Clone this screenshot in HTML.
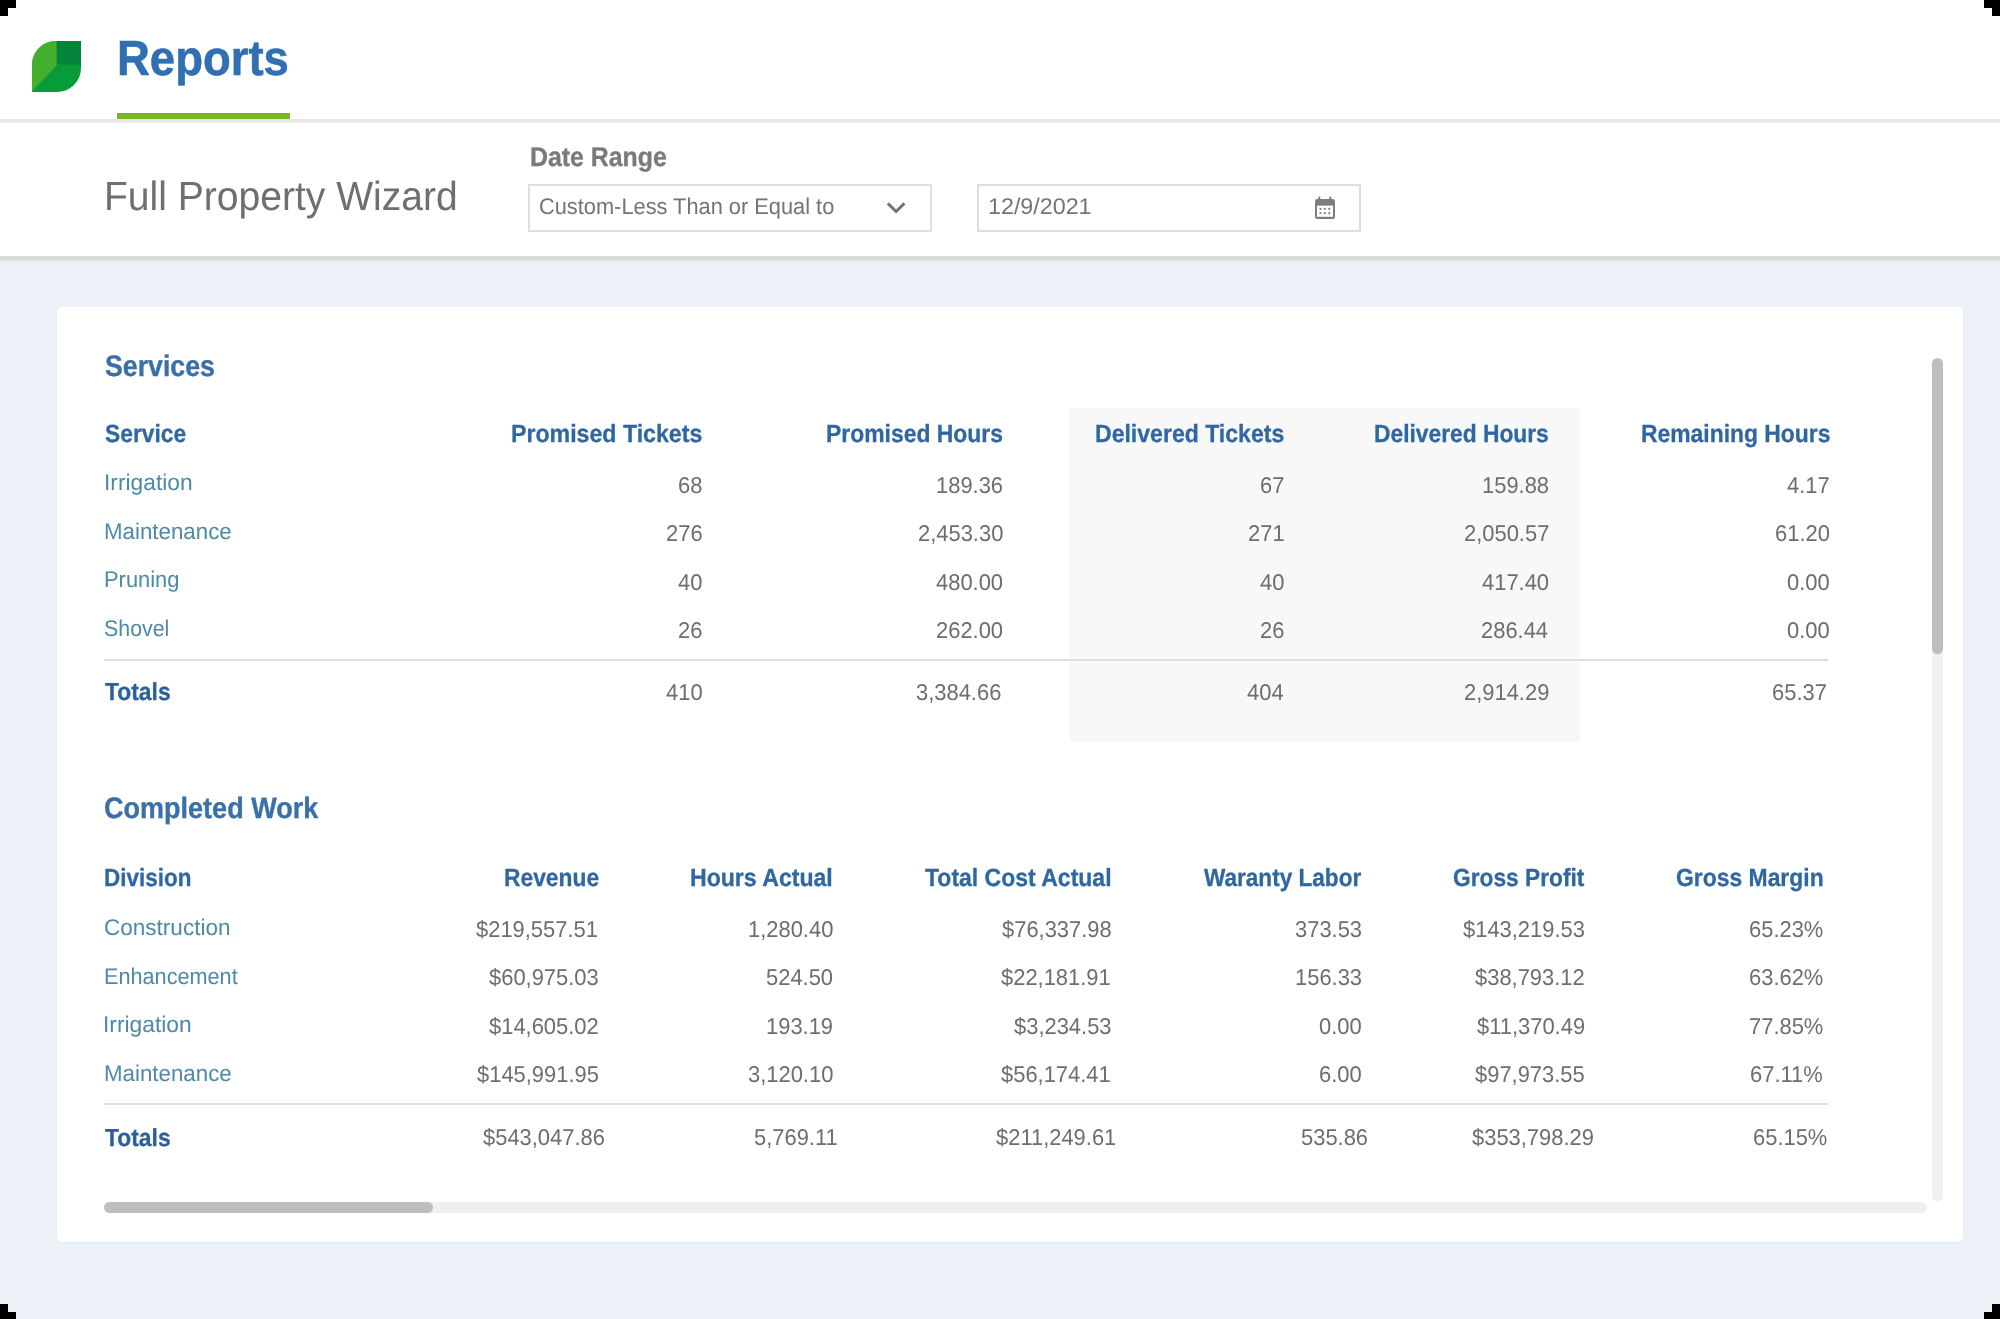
<!DOCTYPE html>
<html>
<head>
<meta charset="utf-8">
<title>Reports - Full Property Wizard</title>
<style>
html,body{margin:0;padding:0;}
body{width:2000px;height:1319px;overflow:hidden;background:#ecf0f7;font-family:"Liberation Sans",sans-serif;position:relative;}
.abs{position:absolute;}
.t{position:absolute;white-space:nowrap;transform-origin:0 0;display:block;text-rendering:geometricPrecision;}
#top{left:0;top:0;width:2000px;height:119px;background:#fff;}
#sep1{left:0;top:119px;width:2000px;height:4px;background:linear-gradient(#e2e4e4,#eff0f0);}
#sub{left:0;top:123px;width:2000px;height:133px;background:#fff;}
#sep2{left:0;top:256px;width:2000px;height:8px;background:linear-gradient(#d9dbdd 0,#d6d8da 45%,#e4e7ea 62%,#ebeef3 80%,#ecf0f7 100%);}
#uline{left:117px;top:113px;width:172.6px;height:6px;background:#77b726;}
.box{box-sizing:border-box;border:2px solid #dcdedf;background:#fff;}
#sel{left:528px;top:184px;width:404px;height:48px;}
#date{left:977px;top:184px;width:384px;height:48px;}
#card{left:57px;top:307px;width:1906px;height:935px;background:#fff;border-radius:5px;box-shadow:0 1px 1px rgba(0,0,0,0.035);}
#shade{left:1069px;top:408px;width:511px;height:334px;background:#f8f8f8;}
.hr{height:2px;background:#dcdedf;left:104px;width:1724px;}
#vtrack{left:1931.5px;top:358px;width:11px;height:843px;background:#f0f0f0;border-radius:5.5px;}
#vthumb{left:1931.5px;top:358px;width:11px;height:296px;background:#bebebe;border-radius:5.5px;}
#htrack{left:104px;top:1202px;width:1823px;height:11px;background:#f0f0f0;border-radius:5.5px;}
#hthumb{left:104px;top:1202px;width:329px;height:11px;background:#bebebe;border-radius:5.5px;}
.k{background:#000;}
</style>
</head>
<body>
<div class="abs" id="top"></div>
<div class="abs" id="sep1"></div>
<div class="abs" id="sub"></div>
<div class="abs" id="sep2"></div>
<div class="abs" id="uline"></div>

<!-- logo -->
<svg class="abs" style="left:32px;top:41px" width="49" height="51" viewBox="0 0 49 51">
  <path d="M24 0 H49 V27 A24 24 0 0 1 25 51 H0 V24 A24 24 0 0 1 24 0 Z" fill="#079b3a"/>
  <path d="M25 0 L25 24 L0 50.6 L0 24 A24 24 0 0 1 24 0 Z" fill="#44af2c"/>
  <path d="M24.6 0 H49 V23.6 H24.6 Z" fill="#03843a"/>
</svg>

<div class="abs box" id="sel"></div>
<div class="abs box" id="date"></div>

<!-- chevron -->
<svg class="abs" style="left:884px;top:199px" width="24" height="18" viewBox="0 0 24 18">
  <path d="M3.8 4.4 L12.1 12.5 L20.4 4.4" fill="none" stroke="#737373" stroke-width="3" stroke-linecap="butt" stroke-linejoin="miter"/>
</svg>

<!-- calendar -->
<svg class="abs" style="left:1313px;top:195px" width="24" height="26" viewBox="0 0 24 26">
  <rect x="2" y="4" width="20" height="20" rx="2.2" fill="#7b7e7d"/>
  <rect x="5.3" y="1.6" width="2" height="4" rx="1" fill="#7b7e7d"/>
  <rect x="16.2" y="1.6" width="2" height="4" rx="1" fill="#7b7e7d"/>
  <rect x="4" y="10.6" width="16" height="11.2" fill="#fff"/>
  <g fill="#7b7e7d">
    <rect x="6.5" y="12.9" width="1.9" height="1.9"/><rect x="10.9" y="12.9" width="1.9" height="1.9"/><rect x="15.3" y="12.9" width="1.9" height="1.9"/>
    <rect x="6.5" y="17.2" width="1.9" height="1.9"/><rect x="10.9" y="17.2" width="1.9" height="1.9"/><rect x="15.3" y="17.2" width="1.9" height="1.9"/>
  </g>
</svg>

<div class="abs" id="card"></div>
<div class="abs" id="shade"></div>
<div class="abs hr" style="top:658.5px"></div>
<div class="abs hr" style="top:1102.5px"></div>
<div class="abs" id="vtrack"></div>
<div class="abs" id="vthumb"></div>
<div class="abs" id="htrack"></div>
<div class="abs" id="hthumb"></div>

<div id="txt" class="abs" style="left:0;top:0;width:2000px;height:1319px;will-change:transform">
<span class="t" style="left:117.23px;top:29px;font-size:49.3px;line-height:59px;color:#2f6fb2;transform:scaleX(0.9228);font-weight:bold;-webkit-text-stroke:0.59px #2f6fb2;">Reports</span>
<span class="t" style="left:104.13px;top:172px;font-size:40.9px;line-height:49px;color:#6f6f6f;transform:scaleX(0.9551);">Full Property Wizard</span>
<span class="t" style="left:530.28px;top:141px;font-size:27.0px;line-height:32px;color:#7a7a7a;transform:scaleX(0.9205);font-weight:bold;-webkit-text-stroke:0.32px #7a7a7a;">Date Range</span>
<span class="t" style="left:539.04px;top:193px;font-size:22.7px;line-height:27px;color:#747474;transform:scaleX(0.9610);">Custom-Less Than or Equal to</span>
<span class="t" style="left:988.37px;top:193px;font-size:22.7px;line-height:27px;color:#747474;transform:scaleX(1.0261);">12/9/2021</span>
<span class="t" style="left:105.00px;top:349px;font-size:29.6px;line-height:36px;color:#3a70a8;transform:scaleX(0.9026);font-weight:bold;-webkit-text-stroke:0.36px #3a70a8;">Services</span>
<span class="t" style="left:104.60px;top:419px;font-size:24.9px;line-height:30px;color:#2f67a3;transform:scaleX(0.9164);font-weight:bold;-webkit-text-stroke:0.30px #2f67a3;">Service</span>
<span class="t" style="left:511.47px;top:419px;font-size:24.9px;line-height:30px;color:#2f67a3;transform:scaleX(0.9302);font-weight:bold;-webkit-text-stroke:0.30px #2f67a3;">Promised Tickets</span>
<span class="t" style="left:826.48px;top:419px;font-size:24.9px;line-height:30px;color:#2f67a3;transform:scaleX(0.9201);font-weight:bold;-webkit-text-stroke:0.30px #2f67a3;">Promised Hours</span>
<span class="t" style="left:1095.17px;top:419px;font-size:24.9px;line-height:30px;color:#2f67a3;transform:scaleX(0.9261);font-weight:bold;-webkit-text-stroke:0.30px #2f67a3;">Delivered Tickets</span>
<span class="t" style="left:1374.48px;top:419px;font-size:24.9px;line-height:30px;color:#2f67a3;transform:scaleX(0.9156);font-weight:bold;-webkit-text-stroke:0.30px #2f67a3;">Delivered Hours</span>
<span class="t" style="left:1641.08px;top:419px;font-size:24.9px;line-height:30px;color:#2f67a3;transform:scaleX(0.9191);font-weight:bold;-webkit-text-stroke:0.30px #2f67a3;">Remaining Hours</span>
<span class="t" style="left:103.59px;top:469px;font-size:22.7px;line-height:27px;color:#4d8aa8;transform:scaleX(1.0041);">Irrigation</span>
<span class="t" style="left:103.92px;top:518px;font-size:22.7px;line-height:27px;color:#4d8aa8;transform:scaleX(0.9829);">Maintenance</span>
<span class="t" style="left:103.94px;top:566px;font-size:22.7px;line-height:27px;color:#4d8aa8;transform:scaleX(0.9650);">Pruning</span>
<span class="t" style="left:103.96px;top:615px;font-size:22.7px;line-height:27px;color:#4d8aa8;transform:scaleX(0.9416);">Shovel</span>
<span class="t" style="left:678.31px;top:472px;font-size:22.9px;line-height:27px;color:#6e6e6e;transform:scaleX(0.9578);">68</span>
<span class="t" style="left:936.14px;top:472px;font-size:22.9px;line-height:27px;color:#6e6e6e;transform:scaleX(0.9578);">189.36</span>
<span class="t" style="left:1259.91px;top:472px;font-size:22.9px;line-height:27px;color:#6e6e6e;transform:scaleX(0.9578);">67</span>
<span class="t" style="left:1482.14px;top:472px;font-size:22.9px;line-height:27px;color:#6e6e6e;transform:scaleX(0.9578);">159.88</span>
<span class="t" style="left:1786.93px;top:472px;font-size:22.9px;line-height:27px;color:#6e6e6e;transform:scaleX(0.9578);">4.17</span>
<span class="t" style="left:666.12px;top:520px;font-size:22.9px;line-height:27px;color:#6e6e6e;transform:scaleX(0.9578);">276</span>
<span class="t" style="left:917.86px;top:520px;font-size:22.9px;line-height:27px;color:#6e6e6e;transform:scaleX(0.9578);">2,453.30</span>
<span class="t" style="left:1247.72px;top:520px;font-size:22.9px;line-height:27px;color:#6e6e6e;transform:scaleX(0.9578);">271</span>
<span class="t" style="left:1463.86px;top:520px;font-size:22.9px;line-height:27px;color:#6e6e6e;transform:scaleX(0.9578);">2,050.57</span>
<span class="t" style="left:1774.74px;top:520px;font-size:22.9px;line-height:27px;color:#6e6e6e;transform:scaleX(0.9578);">61.20</span>
<span class="t" style="left:678.31px;top:569px;font-size:22.9px;line-height:27px;color:#6e6e6e;transform:scaleX(0.9578);">40</span>
<span class="t" style="left:936.14px;top:569px;font-size:22.9px;line-height:27px;color:#6e6e6e;transform:scaleX(0.9578);">480.00</span>
<span class="t" style="left:1259.91px;top:569px;font-size:22.9px;line-height:27px;color:#6e6e6e;transform:scaleX(0.9578);">40</span>
<span class="t" style="left:1482.14px;top:569px;font-size:22.9px;line-height:27px;color:#6e6e6e;transform:scaleX(0.9578);">417.40</span>
<span class="t" style="left:1786.93px;top:569px;font-size:22.9px;line-height:27px;color:#6e6e6e;transform:scaleX(0.9578);">0.00</span>
<span class="t" style="left:678.31px;top:617px;font-size:22.9px;line-height:27px;color:#6e6e6e;transform:scaleX(0.9578);">26</span>
<span class="t" style="left:936.14px;top:617px;font-size:22.9px;line-height:27px;color:#6e6e6e;transform:scaleX(0.9578);">262.00</span>
<span class="t" style="left:1259.91px;top:617px;font-size:22.9px;line-height:27px;color:#6e6e6e;transform:scaleX(0.9578);">26</span>
<span class="t" style="left:1481.18px;top:617px;font-size:22.9px;line-height:27px;color:#6e6e6e;transform:scaleX(0.9578);">286.44</span>
<span class="t" style="left:1786.93px;top:617px;font-size:22.9px;line-height:27px;color:#6e6e6e;transform:scaleX(0.9578);">0.00</span>
<span class="t" style="left:104.90px;top:678px;font-size:24.6px;line-height:30px;color:#2d5f98;transform:scaleX(0.9296);font-weight:bold;-webkit-text-stroke:0.30px #2d5f98;">Totals</span>
<span class="t" style="left:665.72px;top:679px;font-size:22.9px;line-height:27px;color:#6e6e6e;transform:scaleX(0.9578);">410</span>
<span class="t" style="left:915.56px;top:679px;font-size:22.9px;line-height:27px;color:#6e6e6e;transform:scaleX(0.9578);">3,384.66</span>
<span class="t" style="left:1246.76px;top:679px;font-size:22.9px;line-height:27px;color:#6e6e6e;transform:scaleX(0.9578);">404</span>
<span class="t" style="left:1463.86px;top:679px;font-size:22.9px;line-height:27px;color:#6e6e6e;transform:scaleX(0.9578);">2,914.29</span>
<span class="t" style="left:1772.34px;top:679px;font-size:22.9px;line-height:27px;color:#6e6e6e;transform:scaleX(0.9578);">65.37</span>
<span class="t" style="left:103.69px;top:791px;font-size:29.6px;line-height:36px;color:#3a70a8;transform:scaleX(0.9132);font-weight:bold;-webkit-text-stroke:0.36px #3a70a8;">Completed Work</span>
<span class="t" style="left:103.70px;top:863px;font-size:24.9px;line-height:30px;color:#2f67a3;transform:scaleX(0.9026);font-weight:bold;-webkit-text-stroke:0.30px #2f67a3;">Division</span>
<span class="t" style="left:504.08px;top:863px;font-size:24.9px;line-height:30px;color:#2f67a3;transform:scaleX(0.9165);font-weight:bold;-webkit-text-stroke:0.30px #2f67a3;">Revenue</span>
<span class="t" style="left:690.47px;top:863px;font-size:24.9px;line-height:30px;color:#2f67a3;transform:scaleX(0.9273);font-weight:bold;-webkit-text-stroke:0.30px #2f67a3;">Hours Actual</span>
<span class="t" style="left:925.40px;top:863px;font-size:24.9px;line-height:30px;color:#2f67a3;transform:scaleX(0.9240);font-weight:bold;-webkit-text-stroke:0.30px #2f67a3;">Total Cost Actual</span>
<span class="t" style="left:1203.75px;top:863px;font-size:24.9px;line-height:30px;color:#2f67a3;transform:scaleX(0.9070);font-weight:bold;-webkit-text-stroke:0.30px #2f67a3;">Waranty Labor</span>
<span class="t" style="left:1453.09px;top:863px;font-size:24.9px;line-height:30px;color:#2f67a3;transform:scaleX(0.9134);font-weight:bold;-webkit-text-stroke:0.30px #2f67a3;">Gross Profit</span>
<span class="t" style="left:1676.08px;top:863px;font-size:24.9px;line-height:30px;color:#2f67a3;transform:scaleX(0.9201);font-weight:bold;-webkit-text-stroke:0.30px #2f67a3;">Gross Margin</span>
<span class="t" style="left:103.71px;top:914px;font-size:22.7px;line-height:27px;color:#4d8aa8;transform:scaleX(0.9933);">Construction</span>
<span class="t" style="left:103.75px;top:963px;font-size:22.7px;line-height:27px;color:#4d8aa8;transform:scaleX(0.9549);">Enhancement</span>
<span class="t" style="left:103.49px;top:1011px;font-size:22.7px;line-height:27px;color:#4d8aa8;transform:scaleX(1.0041);">Irrigation</span>
<span class="t" style="left:103.72px;top:1060px;font-size:22.7px;line-height:27px;color:#4d8aa8;transform:scaleX(0.9829);">Maintenance</span>
<span class="t" style="left:475.88px;top:916px;font-size:22.9px;line-height:27px;color:#6e6e6e;transform:scaleX(0.9578);">$219,557.51</span>
<span class="t" style="left:747.76px;top:916px;font-size:22.9px;line-height:27px;color:#6e6e6e;transform:scaleX(0.9578);">1,280.40</span>
<span class="t" style="left:1002.07px;top:916px;font-size:22.9px;line-height:27px;color:#6e6e6e;transform:scaleX(0.9578);">$76,337.98</span>
<span class="t" style="left:1294.64px;top:916px;font-size:22.9px;line-height:27px;color:#6e6e6e;transform:scaleX(0.9578);">373.53</span>
<span class="t" style="left:1462.98px;top:916px;font-size:22.9px;line-height:27px;color:#6e6e6e;transform:scaleX(0.9578);">$143,219.53</span>
<span class="t" style="left:1748.58px;top:916px;font-size:22.9px;line-height:27px;color:#6e6e6e;transform:scaleX(0.9578);">65.23%</span>
<span class="t" style="left:489.27px;top:964px;font-size:22.9px;line-height:27px;color:#6e6e6e;transform:scaleX(0.9578);">$60,975.03</span>
<span class="t" style="left:766.04px;top:964px;font-size:22.9px;line-height:27px;color:#6e6e6e;transform:scaleX(0.9578);">524.50</span>
<span class="t" style="left:1000.87px;top:964px;font-size:22.9px;line-height:27px;color:#6e6e6e;transform:scaleX(0.9578);">$22,181.91</span>
<span class="t" style="left:1294.64px;top:964px;font-size:22.9px;line-height:27px;color:#6e6e6e;transform:scaleX(0.9578);">156.33</span>
<span class="t" style="left:1475.17px;top:964px;font-size:22.9px;line-height:27px;color:#6e6e6e;transform:scaleX(0.9578);">$38,793.12</span>
<span class="t" style="left:1748.58px;top:964px;font-size:22.9px;line-height:27px;color:#6e6e6e;transform:scaleX(0.9578);">63.62%</span>
<span class="t" style="left:489.27px;top:1013px;font-size:22.9px;line-height:27px;color:#6e6e6e;transform:scaleX(0.9578);">$14,605.02</span>
<span class="t" style="left:766.04px;top:1013px;font-size:22.9px;line-height:27px;color:#6e6e6e;transform:scaleX(0.9578);">193.19</span>
<span class="t" style="left:1014.26px;top:1013px;font-size:22.9px;line-height:27px;color:#6e6e6e;transform:scaleX(0.9578);">$3,234.53</span>
<span class="t" style="left:1319.03px;top:1013px;font-size:22.9px;line-height:27px;color:#6e6e6e;transform:scaleX(0.9578);">0.00</span>
<span class="t" style="left:1476.80px;top:1013px;font-size:22.9px;line-height:27px;color:#6e6e6e;transform:scaleX(0.9578);">$11,370.49</span>
<span class="t" style="left:1748.58px;top:1013px;font-size:22.9px;line-height:27px;color:#6e6e6e;transform:scaleX(0.9578);">77.85%</span>
<span class="t" style="left:477.08px;top:1061px;font-size:22.9px;line-height:27px;color:#6e6e6e;transform:scaleX(0.9578);">$145,991.95</span>
<span class="t" style="left:747.76px;top:1061px;font-size:22.9px;line-height:27px;color:#6e6e6e;transform:scaleX(0.9578);">3,120.10</span>
<span class="t" style="left:1000.87px;top:1061px;font-size:22.9px;line-height:27px;color:#6e6e6e;transform:scaleX(0.9578);">$56,174.41</span>
<span class="t" style="left:1319.03px;top:1061px;font-size:22.9px;line-height:27px;color:#6e6e6e;transform:scaleX(0.9578);">6.00</span>
<span class="t" style="left:1475.17px;top:1061px;font-size:22.9px;line-height:27px;color:#6e6e6e;transform:scaleX(0.9578);">$97,973.55</span>
<span class="t" style="left:1750.21px;top:1061px;font-size:22.9px;line-height:27px;color:#6e6e6e;transform:scaleX(0.9578);">67.11%</span>
<span class="t" style="left:104.90px;top:1124px;font-size:24.6px;line-height:30px;color:#2d5f98;transform:scaleX(0.9296);font-weight:bold;-webkit-text-stroke:0.30px #2d5f98;">Totals</span>
<span class="t" style="left:483.48px;top:1124px;font-size:22.9px;line-height:27px;color:#6e6e6e;transform:scaleX(0.9578);">$543,047.86</span>
<span class="t" style="left:753.99px;top:1124px;font-size:22.9px;line-height:27px;color:#6e6e6e;transform:scaleX(0.9578);">5,769.11</span>
<span class="t" style="left:995.91px;top:1124px;font-size:22.9px;line-height:27px;color:#6e6e6e;transform:scaleX(0.9578);">$211,249.61</span>
<span class="t" style="left:1300.84px;top:1124px;font-size:22.9px;line-height:27px;color:#6e6e6e;transform:scaleX(0.9578);">535.86</span>
<span class="t" style="left:1471.78px;top:1124px;font-size:22.9px;line-height:27px;color:#6e6e6e;transform:scaleX(0.9578);">$353,798.29</span>
<span class="t" style="left:1753.48px;top:1124px;font-size:22.9px;line-height:27px;color:#6e6e6e;transform:scaleX(0.9578);">65.15%</span>
</div>

<!-- corner marks -->
<div class="abs k" style="left:0;top:0;width:16px;height:8px"></div>
<div class="abs k" style="left:0;top:8px;width:8px;height:8px"></div>
<div class="abs k" style="left:1984px;top:0;width:16px;height:8px"></div>
<div class="abs k" style="left:1992px;top:8px;width:8px;height:8px"></div>
<div class="abs k" style="left:0;top:1304px;width:8px;height:15px"></div>
<div class="abs k" style="left:8px;top:1312px;width:8px;height:7px"></div>
<div class="abs k" style="left:1992px;top:1304px;width:8px;height:15px"></div>
<div class="abs k" style="left:1984px;top:1312px;width:8px;height:7px"></div>
</body>
</html>
